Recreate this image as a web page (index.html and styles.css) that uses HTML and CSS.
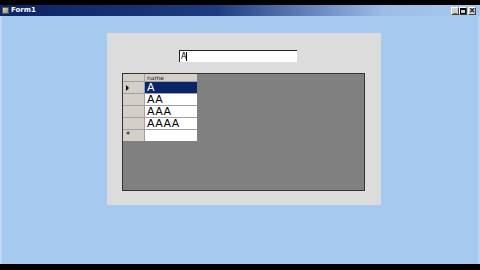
FILE: index.html
```html
<!DOCTYPE html>
<html>
<head>
<meta charset="utf-8">
<link rel="stylesheet" href="styles.css">
</head>
<body>
<div class="screen">
  <div class="titlebar">
    <div class="tb-left">
      <span class="appicon"></span>
      <span class="title">Form1</span>
    </div>
    <div class="tb-btns">
      <span class="tbtn">_</span>
      <span class="tbtn"><span class="maxbox"></span></span>
      <span class="tbtn close">×</span>
    </div>
  </div>
  <div class="client">
    <div class="panel">
      <div class="textbox"><span class="tbtext">A</span><span class="caret"></span></div>
      <div class="grid">
        <div class="gtable">
          <div class="grow head"><div class="rh"></div><div class="cell hcell">name</div></div>
          <div class="grow sel"><div class="rh"><span class="arrow"></span></div><div class="cell">A</div></div>
          <div class="grow"><div class="rh"></div><div class="cell">AA</div></div>
          <div class="grow"><div class="rh"></div><div class="cell">AAA</div></div>
          <div class="grow"><div class="rh"></div><div class="cell">AAAA</div></div>
          <div class="grow newrow"><div class="rh star">*</div><div class="cell"></div></div>
        </div>
      </div>
    </div>
  </div>
</div>
</body>
</html>
```
FILE: styles.css
```css
html, body {
  margin: 0;
  padding: 0;
  background: #000;
  width: 480px;
  height: 270px;
  overflow: hidden;
}
.screen {
  padding-top: 5px;
}
.titlebar {
  height: 11px;
  background: linear-gradient(to right, #0c2364 0%, #1f3a80 45%, #9dbde8 80%, #a6c8f0 100%);
  display: flex;
  justify-content: space-between;
  align-items: center;
}
.tb-left {
  display: flex;
  align-items: center;
  gap: 2px;
  padding-left: 2px;
}
.appicon {
  width: 7px;
  height: 7px;
  background: linear-gradient(135deg, #e6d8b0, #8c8c8c);
  border: 1px solid #555;
  box-sizing: border-box;
}
.title {
  font-family: "DejaVu Sans", sans-serif;
  font-weight: bold;
  font-size: 7px;
  color: #fff;
  line-height: 9px;
}
.tb-btns {
  display: flex;
  padding-right: 4px;
}
.tbtn {
  width: 8px;
  height: 8px;
  background: #d4d0c8;
  border: 1px solid;
  border-color: #fff #404040 #404040 #fff;
  box-sizing: border-box;
  font-family: "DejaVu Sans", sans-serif;
  font-size: 7px;
  line-height: 5px;
  color: #000;
  display: flex;
  align-items: center;
  justify-content: center;
  overflow: hidden;
}
.tbtn.close {
  margin-left: 1px;
  font-weight: bold;
  font-size: 8px;
  line-height: 6px;
}
.maxbox {
  width: 4px;
  height: 3px;
  border: 1px solid #000;
  border-top-width: 2px;
}
.client {
  height: 248px;
  background: #a6c9f0;
  border-left: 2px solid #c0d8f4;
  border-right: 2px solid #bcd5f2;
  box-sizing: border-box;
  padding-top: 17px;
}
.panel {
  margin-left: 105px;
  width: 274px;
  height: 172px;
  background: #dcdcdc;
  box-sizing: border-box;
  padding-top: 17px;
}
.textbox {
  margin-left: 72px;
  width: 118px;
  height: 12px;
  background: #fff;
  border-top: 1px solid #222;
  border-left: 1px solid #222;
  box-sizing: border-box;
  display: flex;
  align-items: center;
  padding-left: 1px;
}
.tbtext {
  font-family: "DejaVu Sans", sans-serif;
  font-size: 8px;
  color: #000;
  line-height: 10px;
}
.caret {
  width: 1px;
  height: 9px;
  background: #000;
}
.grid {
  margin-top: 11px;
  margin-left: 15px;
  width: 243px;
  height: 118px;
  background: #808080;
  border: 1px solid #333;
  box-sizing: border-box;
}
.gtable {
  width: 74px;
}
.grow {
  display: flex;
  height: 12px;
  border-bottom: 1px solid #a0a0a0;
  box-sizing: border-box;
}
.grow.head {
  height: 8px;
}
.rh {
  width: 22px;
  background: #d4d0c8;
  border-right: 1px solid #a0a0a0;
  box-sizing: border-box;
  display: flex;
  align-items: center;
  justify-content: center;
}
.cell {
  flex: 1;
  background: #fff;
  font-family: "DejaVu Sans", sans-serif;
  font-size: 11px;
  line-height: 11px;
  color: #000;
  padding-left: 2px;
  white-space: nowrap;
  letter-spacing: 0.4px;
}
.hcell {
  background: #d4d0c8;
  font-size: 6px;
  line-height: 7px;
  letter-spacing: 0;
  color: #222;
}
.grow.sel .cell {
  background: #0a246a;
  color: #fff;
}
.arrow {
  width: 0;
  height: 0;
  border-top: 3px solid transparent;
  border-bottom: 3px solid transparent;
  border-left: 3px solid #000;
  margin-left: -12px;
}
.newrow {
  height: 11px;
  border-bottom: none;
}
.star {
  font-family: "DejaVu Sans", sans-serif;
  font-size: 8px;
  line-height: 8px;
  color: #000;
  justify-content: flex-start;
  padding-left: 3px;
}
```
